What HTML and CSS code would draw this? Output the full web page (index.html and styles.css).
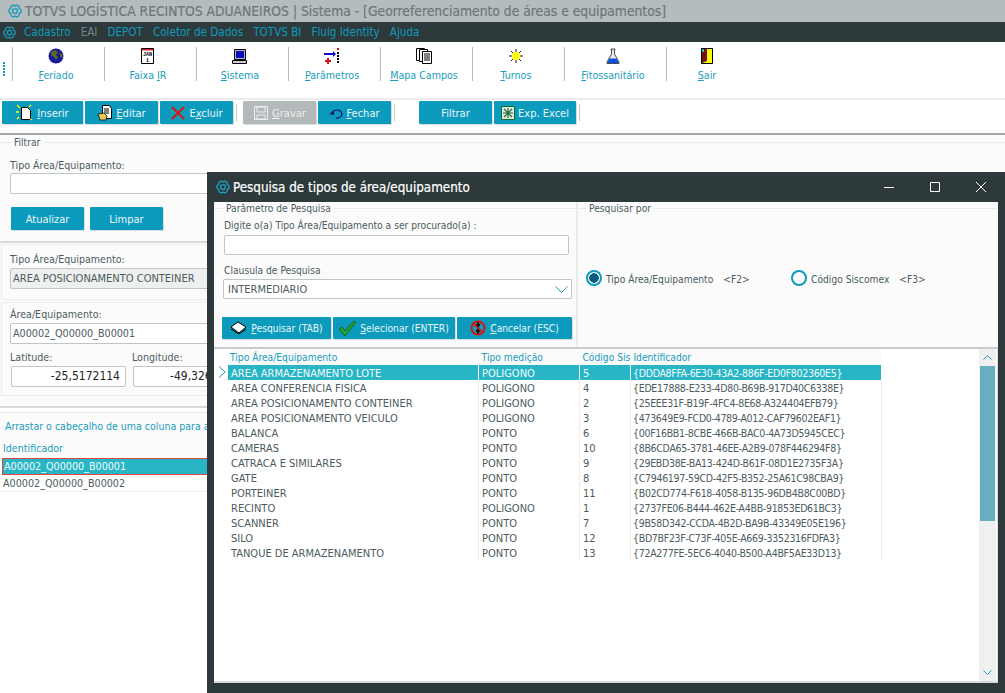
FILE: index.html
```html
<!DOCTYPE html>
<html lang="pt-BR">
<head>
<meta charset="utf-8">
<title>TOTVS</title>
<link rel="stylesheet" href="styles.css">
</head>
<body>
<svg class="defs" width="0" height="0" aria-hidden="true">
  <symbol id="gear" viewBox="0 0 16 16">
    <g fill="none" stroke="currentColor" stroke-width="1.4">
      <path d="M12.33 5.5A2.6 2.6 0 0 1 12.33 10.5A2.6 2.6 0 0 1 8 13A2.6 2.6 0 0 1 3.67 10.5A2.6 2.6 0 0 1 3.67 5.5A2.6 2.6 0 0 1 8 3A2.6 2.6 0 0 1 12.33 5.5Z"/>
      <circle cx="8" cy="8" r="2.400"/>
    </g>
  </symbol>
</svg>
<div class="app">
  <header class="titlebar"><svg class="gear"><use href="#gear"/></svg><span>TOTVS LOGÍSTICA RECINTOS ADUANEIROS | Sistema - [Georreferenciamento de áreas e equipamentos]</span></header>
  <nav class="menubar">
    <svg class="gear small"><use href="#gear"/></svg>
    <span>Cadastro</span><span class="off">EAI</span><span>DEPOT</span><span>Coletor de Dados</span><span>TOTVS BI</span><span>Fluig Identity</span><span>Ajuda</span>
  </nav>
  <div class="toolbar">
    <div class="handle"></div>
    <div class="tool"><svg width="16" height="16" viewBox="0 0 16 16"><circle cx="8" cy="8" r="7.500" fill="#1a1a9a"/><path d="M3 4l4-2 3 2-2 3 2 2-2 3-2-3-3-2zM11 5l3 1 1 3-2 1z" fill="#5d6b1e"/></svg><span><u>F</u>eriado</span></div>
    <div class="tool"><svg width="14" height="16" viewBox="0 0 14 16"><path d="M.5.500h12v15H.5z" fill="#fff" stroke="#000"/><path d="M1 1h11v1.500H1z" fill="#d22"/><text x="6.500" y="8" class="cal">JAN</text><text x="6.500" y="14" class="cal">1</text></svg><span>Faixa <u>I</u>R</span></div>
    <div class="tool"><svg width="16" height="16" viewBox="0 0 16 16"><path d="M2.500 1.500h11v10h-11z" fill="#bbb" stroke="#000"/><path d="M4 3h8v7H4z" fill="#0a0ac0"/><path d="M.5 12.500h14v3H.5z" fill="#ccc" stroke="#000"/></svg><span><u>S</u>istema</span></div>
    <div class="tool"><svg width="16" height="16" viewBox="0 0 16 16"><path d="M0 5h9V3l3 3-3 3V7H0z" fill="#0a0ad0"/><path d="M3 10h2v2h2v2H5v2H3v-2H1v-2h2z" fill="#e01010"/><path d="M13 0h2v2h-2z" fill="#e01010"/><path d="M13 4h2v2h-2zM13 7h2v2h-2zM13 10h2v2h-2zM13 13h2v2h-2z" fill="#000"/></svg><span><u>P</u>arâmetros</span></div>
    <div class="tool"><svg width="16" height="16" viewBox="0 0 16 16"><path d="M.5.500h8v12h-8z" fill="#fff" stroke="#000"/><path d="M3.500 1.500h8v12h-8z" fill="#fff" stroke="#000"/><path d="M6.500 3.500h9v12h-9z" fill="#fff" stroke="#000"/><path d="M8 6h6M8 8h6M8 10h6M8 12h6" stroke="#000"/></svg><span><u>M</u>apa Campos</span></div>
    <div class="tool"><svg width="16" height="16" viewBox="0 0 16 16"><path d="M8 1v3M8 12v3M1 8h3M12 8h3M3 3l2 2M11 11l2 2M13 3l-2 2M5 11l-2 2" stroke="#222"/><circle cx="8" cy="8" r="4" fill="#ff0"/></svg><span><u>T</u>urnos</span></div>
    <div class="tool wide"><svg width="16" height="16" viewBox="0 0 16 16"><path d="M6 1h4v1H9.500v4L14 14v1.500H2V14l4.500-8V2H6z" fill="#e8e8f0" stroke="#222" stroke-width=".8"/><path d="M4.500 10.500h7l2.500 4.500H2z" fill="#0a50e0"/></svg><span><u>F</u>itossanitário</span></div>
    <div class="tool last"><svg width="12" height="16" viewBox="0 0 12 16"><path d="M.5.500h11v15H.5z" fill="#ff0" stroke="#000"/><path d="M1 1h5v12l-5 2z" fill="#7a1010"/><path d="M1 1h2v3H1z" fill="#3bb"/></svg><span><u>S</u>air</span></div>
  </div>
  <div class="actionbar">
    <button class="btn w81"><svg width="18" height="18" viewBox="0 0 18 18"><path d="M5.500 3.500h6l3 3v9h-9z" fill="#fff" stroke="#000"/><path d="M1 1l3 3M15 1l-2 2M0 8h3M1 15l2-2M16 16l-2-1" stroke="#ff0" stroke-width="1.300"/></svg><span><u>I</u>nserir</span></button>
    <button class="btn w73"><svg width="16" height="16" viewBox="0 0 16 16"><path d="M5.500.5h7l2 3v10h-9z" fill="#fff" stroke="#000"/><path d="M7 4h5M7 6h5M7 8h5" stroke="#000"/><path d="M1 9l6-1 3 3-1 4H3z" fill="#e6c85a" stroke="#000" stroke-width=".7"/></svg><span><u>E</u>ditar</span></button>
    <button class="btn w73"><svg width="16" height="16" viewBox="0 0 16 16"><path d="M2 2l12 12M14 2L2 14" stroke="#e01010" stroke-width="1.800"/></svg><span>E<u>x</u>cluir</span></button>
    <i class="sep"></i>
    <button class="btn w73 disabled"><svg width="16" height="16" viewBox="0 0 16 16"><path d="M1.500 1.500h13v13h-13z" fill="none" stroke="#eee"/><path d="M4 2h8v5H4zM4 10h8v4H4z" fill="none" stroke="#eee"/></svg><span><u>G</u>ravar</span></button>
    <button class="btn w73"><svg width="14" height="12" viewBox="0 0 14 12"><path d="M3 6a5 4 0 1 1 4 5h3" fill="none" stroke="#12126e" stroke-width="1.200"/><path d="M0 7l5-3v4z" fill="#12126e"/></svg><span><u>F</u>echar</span></button>
    <i class="sep"></i>
    <i class="gap"></i>
    <button class="btn w73"><span>Filtrar</span></button>
    <button class="btn w82"><svg width="14" height="14" viewBox="0 0 14 14"><path d="M.5.500h13v13H.5z" fill="#dfeadf" stroke="#0d6b2c"/><path d="M3 3l8 8M11 3l-8 8M7 2v10M2 7h10" stroke="#226b3a" stroke-width="1.200"/></svg><span>Exp. Excel</span></button>
    <i class="sep"></i>
  </div>
  <main class="content">
    <section class="filter">
      <div class="legend"><span>Filtrar</span></div>
      <label>Tipo Área/Equipamento:</label>
      <div class="input full"></div>
      <div class="filter-btns"><button class="btn w73"><span>Atualizar</span></button><button class="btn w73"><span>Limpar</span></button></div>
    </section>
    <section class="panel p1">
      <label>Tipo Área/Equipamento:</label>
      <div class="input full ro">AREA POSICIONAMENTO CONTEINER</div>
    </section>
    <section class="panel p2">
      <label>Área/Equipamento:</label>
      <div class="input full code">A00002_Q00000_B00001</div>
      <div class="coords">
        <div class="coord"><label>Latitude:</label><div class="input num">-25,5172114</div></div>
        <div class="coord"><label>Longitude:</label><div class="input num long">-49,3269</div></div>
      </div>
    </section>
    <section class="records">
      <div class="drag">Arrastar o cabeçalho de uma coluna para agrupar</div>
      <div class="rec-head">Identificador</div>
      <div class="rec sel">A00002_Q00000_B00001</div>
      <div class="rec">A00002_Q00000_B00002</div>
    </section>
  </main>
</div>

<div class="dialog">
  <div class="dlg-title">
    <svg class="gear"><use href="#gear"/></svg>
    <span class="dlg-name">Pesquisa de tipos de área/equipamento</span>
    <svg class="wbtn" width="12" height="12" viewBox="0 0 12 12"><path d="M1 6.500h10" stroke="#fff"/></svg>
    <svg class="wbtn" width="12" height="12" viewBox="0 0 12 12"><path d="M1.500 1.500h9v9h-9z" fill="none" stroke="#fff"/></svg>
    <svg class="wbtn" width="12" height="12" viewBox="0 0 12 12"><path d="M1 1l10 10M11 1L1 11" stroke="#fff"/></svg>
  </div>
  <div class="dlg-body">
    <div class="dlg-top">
      <section class="group g-left">
        <div class="legend l2"><span>Parâmetro de Pesquisa</span></div>
        <label>Digite o(a) Tipo Área/Equipamento a ser procurado(a) :</label>
        <div class="input search"></div>
        <label class="lab2">Clausula de Pesquisa</label>
        <div class="select"><span>INTERMEDIARIO</span><svg width="13" height="7" viewBox="0 0 13 7"><path d="M.5.500l6 6 6-6" fill="none" stroke="#1a9cbd"/></svg></div>
        <div class="dlg-btns">
          <button class="btn d1"><svg width="17" height="14" viewBox="0 0 17 14"><path d="M1 6l7-5 8 5-7 6z" fill="#fff" stroke="#000"/><path d="M1 8l8 5 7-5" fill="none" stroke="#000"/></svg><span><u>P</u>esquisar (TAB)</span></button>
          <button class="btn d2"><svg width="17" height="15" viewBox="0 0 17 15"><path d="M0 8l3-2 3 4L15 0l2 1L6 15z" fill="#2aa52a" stroke="#0b4a0b" stroke-width=".7"/></svg><span><u>S</u>elecionar (ENTER)</span></button>
          <button class="btn d3"><svg width="16" height="16" viewBox="0 0 16 16"><circle cx="8" cy="8" r="6.500" fill="none" stroke="#e01010" stroke-width="2"/><path d="M8 2v12M6 5h4M6 11h4" stroke="#111" stroke-width="2"/><path d="M3 3l10 10" stroke="#e01010" stroke-width="1.600"/></svg><span><u>C</u>ancelar (ESC)</span></button>
        </div>
      </section>
      <section class="group g-right">
        <div class="legend l3"><span>Pesquisar por</span></div>
        <div class="radios">
          <div class="radio on"><i></i><span>Tipo Área/Equipamento</span><span class="key">&lt;F2&gt;</span></div>
          <div class="radio"><i></i><span>Código Siscomex</span><span class="key">&lt;F3&gt;</span></div>
        </div>
      </section>
    </div>
    <div class="results">
      <div class="grid">
        <div class="row head"><div class="c c0"></div><div class="c c1">Tipo Área/Equipamento</div><div class="c c2">Tipo medição</div><div class="c c3">Código Sis</div><div class="c c4">Identificador</div></div>
        <div class="row sel"><div class="c c0"><svg width="8" height="12" viewBox="0 0 8 12"><path d="M1 .5l6 5.500-6 5.500" fill="none" stroke="#1a9cbd"/></svg></div><div class="c c1">AREA ARMAZENAMENTO LOTE</div><div class="c c2">POLIGONO</div><div class="c c3">5</div><div class="c c4">{DDDA8FFA-6E30-43A2-886F-ED0F802360E5}</div></div>
        <div class="row"><div class="c c0"></div><div class="c c1">AREA CONFERENCIA FISICA</div><div class="c c2">POLIGONO</div><div class="c c3">4</div><div class="c c4">{EDE17888-E233-4D80-B69B-917D40C6338E}</div></div>
        <div class="row"><div class="c c0"></div><div class="c c1">AREA POSICIONAMENTO CONTEINER</div><div class="c c2">POLIGONO</div><div class="c c3">2</div><div class="c c4">{25EEE31F-B19F-4FC4-8E68-A324404EFB79}</div></div>
        <div class="row"><div class="c c0"></div><div class="c c1">AREA POSICIONAMENTO VEICULO</div><div class="c c2">POLIGONO</div><div class="c c3">3</div><div class="c c4">{473649E9-FCD0-4789-A012-CAF79602EAF1}</div></div>
        <div class="row"><div class="c c0"></div><div class="c c1">BALANCA</div><div class="c c2">PONTO</div><div class="c c3">6</div><div class="c c4">{00F16BB1-8CBE-466B-BAC0-4A73D5945CEC}</div></div>
        <div class="row"><div class="c c0"></div><div class="c c1">CAMERAS</div><div class="c c2">PONTO</div><div class="c c3">10</div><div class="c c4">{8B6CDA65-3781-46EE-A2B9-078F446294F8}</div></div>
        <div class="row"><div class="c c0"></div><div class="c c1">CATRACA E SIMILARES</div><div class="c c2">PONTO</div><div class="c c3">9</div><div class="c c4">{29EBD38E-BA13-424D-B61F-08D1E2735F3A}</div></div>
        <div class="row"><div class="c c0"></div><div class="c c1">GATE</div><div class="c c2">PONTO</div><div class="c c3">8</div><div class="c c4">{C7946197-59CD-42F5-B352-25A61C98CBA9}</div></div>
        <div class="row"><div class="c c0"></div><div class="c c1">PORTEINER</div><div class="c c2">PONTO</div><div class="c c3">11</div><div class="c c4">{B02CD774-F618-4058-B135-96DB4B8C00BD}</div></div>
        <div class="row"><div class="c c0"></div><div class="c c1">RECINTO</div><div class="c c2">POLIGONO</div><div class="c c3">1</div><div class="c c4">{2737FE06-B444-462E-A4BB-91853ED61BC3}</div></div>
        <div class="row"><div class="c c0"></div><div class="c c1">SCANNER</div><div class="c c2">PONTO</div><div class="c c3">7</div><div class="c c4">{9B58D342-CCDA-4B2D-BA9B-43349E05E196}</div></div>
        <div class="row"><div class="c c0"></div><div class="c c1">SILO</div><div class="c c2">PONTO</div><div class="c c3">12</div><div class="c c4">{BD7BF23F-C73F-405E-A669-3352316FDFA3}</div></div>
        <div class="row"><div class="c c0"></div><div class="c c1">TANQUE DE ARMAZENAMENTO</div><div class="c c2">PONTO</div><div class="c c3">13</div><div class="c c4">{72A277FE-5EC6-4040-B500-A4BF5AE33D13}</div></div>
      </div>
      <div class="scroll">
        <svg class="arrow" width="9" height="5" viewBox="0 0 9 5"><path d="M.5 4.500l4-4 4 4" fill="none" stroke="#1a9cbd"/></svg>
        <div class="thumb"></div>
        <svg class="arrow down" width="9" height="5" viewBox="0 0 9 5"><path d="M.5.500l4 4 4-4" fill="none" stroke="#1a9cbd"/></svg>
      </div>
    </div>
  </div>
</div>
</body>
</html>
```
FILE: styles.css
```css
* { box-sizing: border-box; }
html, body { margin: 0; height: 693px; overflow: hidden; }
body { font-family: "DejaVu Sans", "Noto Sans", sans-serif; font-stretch: condensed; font-size: 11px; color: #4d5b60; background: #fff; position: relative; width: 1005px; }
.defs { position: absolute; }
.app { display: flex; flex-direction: column; height: 693px; }
.gear { width: 16px; height: 16px; color: #1a9cbd; flex: none; }
.gear.small { width: 15px; height: 15px; margin-right: 2px; }
.cal { font: bold 5px "Liberation Mono", monospace; text-anchor: middle; fill: #000; }

.titlebar { height: 22px; background: #b5bcbd; display: flex; align-items: center; gap: 2px; padding-left: 7px; color: #6f7779; font-size: 13.75px; white-space: nowrap; -webkit-text-stroke: .2px; }
.menubar { height: 20px; background: #2d393b; display: flex; align-items: center; padding-left: 2px; color: #0f9bbb; font-size: 11.6px; }
.menubar span { padding: 0 5px; }
.menubar .off { color: #7b8486; }

.toolbar { height: 56px; display: flex; padding: 5px 0 0 3px; }
.handle { width: 2px; height: 15px; margin: 15px 7px 0 0; background: repeating-linear-gradient(#0f9bbb 0 2px, transparent 2px 3px); }
.tool { width: 92px; height: 34px; border-left: 1px solid #b7bdbd; display: flex; flex-direction: column; align-items: center; gap: 4px; padding: 1px 5px 0 0; color: #1a9cbd; font-size: 10.6px; }
.tool.wide { width: 102px; }
.tool.last { width: 86px; }
.tool svg, .tool span { flex: none; }
.tool span { line-height: 15px; }

.actionbar { height: 27px; border-top: 2px solid #ececec; display: flex; align-items: center; gap: 2px; padding-left: 2px; }
.btn { height: 23px; border: 0; border-radius: 1px; background: #0c9abd; color: #e9f6fa; font: inherit; font-stretch: condensed; display: flex; align-items: center; justify-content: center; gap: 3px; padding: 0; box-shadow: 1px 1px 0 #d9dddd; }
.btn svg { flex: none; }
.btn span { padding-top: 1px; }
.w81 { width: 81px; } .w73 { width: 73px; } .w82 { width: 82px; }
.btn.disabled { background: #b3b9ba; color: #eceeee; }
.sep { width: 1px; height: 17px; background: #c5c9c9; margin: 0 4px 0 1px; }
.gap { width: 16px; }

.content { flex: 1; border-top: 2px solid #a5a8a8; margin-top: 8px; background: #fbfbfb; display: flex; flex-direction: column; min-height: 0; }
label { display: block; height: 14px; line-height: 14px; font-size: 10.6px; }
.filter { height: 108px; padding: 0 0 0 10px; border-bottom: 2px solid #d6d9d9; }
.legend { height: 14px; margin-left: -10px; display: flex; align-items: center; font-size: 10.2px; }
.legend::before { content: ""; width: 12px; height: 1px; background: #e9ebeb; margin-right: 2px; }
.legend::after { content: ""; flex: 1; height: 1px; background: #e9ebeb; margin-left: 3px; }
.filter label { margin-top: 9px; }
.input { height: 21px; background: #fff; border: 1px solid #c0c5c6; border-radius: 2px; line-height: 19px; padding: 0 2px; color: #4d5b60; white-space: nowrap; overflow: hidden; }
.full { width: 215px; margin-top: 2px; }
.code { font-size: 10.7px; }
.ro { background: #eeefef; }
.filter .input { margin-top: 1px; }
.filter-btns { display: flex; gap: 6px; margin: 13px 0 0 1px; }
.panel { margin: 1px 0 0 1px; padding: 0 0 0 8px; border: 1px solid #eceeee; border-right: 0; }
.p1 { height: 56px; padding-top: 7px; }
.p2 { height: 94px; margin-top: 2px; padding-top: 4px; }
.coords { display: flex; gap: 6px; margin-top: 6px; }
.coord label { margin-bottom: 2px; }
.num { width: 115px; text-align: right; margin-left: 1px; font-size: 12px; color: #222; padding-right: 5px; }
.coord + .coord .num { text-align: left; padding-left: 36px; }
.long { width: 82px; }
.records { margin-top: 10px; border-top: 2px solid #d6d9d9; flex: 1; background: #fff; }
.drag { height: 26px; margin-top: 4px; padding: 6px 0 0 5px; border-top: 1px solid #e4e7e7; color: #1a9cbd; background: #fbfbfb; line-height: 14px; font-size: 10.5px; white-space: nowrap; width: 207px; overflow: hidden; }
.rec-head { height: 20px; padding-left: 3px; color: #1a9cbd; line-height: 20px; font-size: 10.6px; background: #fbfbfb; width: 207px; }
.rec { height: 17px; line-height: 17px; padding-left: 3px; border-bottom: 1px solid #eee; color: #4d5b60; font-size: 10.7px; }
.rec.sel { background: #28b5c6; color: #f4fbfc; border: 1px solid #e0443a; padding-left: 1px; margin-left: 2px; line-height: 15px; }

.dialog { position: absolute; left: 207px; top: 172px; width: 798px; height: 521px; background: #2d393b; padding: 0 7px 10px 7px; display: flex; flex-direction: column; }
.dlg-title { height: 30px; display: flex; align-items: center; margin-left: -7px; padding-left: 8px; color: #fff; }
.dlg-name { flex: 1; margin-left: 2px; font-size: 13.3px; -webkit-text-stroke: .2px; }
.wbtn { width: 12px; margin-right: 34px; }
.wbtn:last-child { margin-right: 11px; }
.dlg-body { flex: 1; background: #fbfbfb; display: flex; flex-direction: column; min-height: 0; }
.dlg-top { height: 145px; display: flex; }
.g-left { width: 364px; border-right: 2px solid #ececec; padding: 0 0 0 10px; }
.g-left label { margin-top: 3px; font-size: 10.2px; line-height: 15px; }
.g-right { flex: 1; }
.l2 { height: 13px; }
.l2::before { width: 10px; }
.l3 { height: 13px; margin-left: 0; }
.l3::before { width: 9px; }
.search { width: 345px; height: 20px; margin-top: 3px; }
.g-left .lab2 { margin-top: 8px; }
.select { width: 349px; height: 20px; margin-left: -1px; margin-top: 2px; background: #fff; border: 1px solid #c0c5c6; border-radius: 1px; display: flex; align-items: center; justify-content: space-between; padding: 0 3px 0 4px; }
.dlg-btns { display: flex; gap: 2px; margin: 18px 0 0 -2px; }
.dlg-btns .btn { height: 22px; gap: 4px; font-size: 10.2px; }
.d1 { width: 109px; } .d2 { width: 122px; } .d3 { width: 115px; }
.radios { display: flex; margin: 55px 0 0 8px; font-size: 10.2px; }
.radio { display: flex; align-items: center; gap: 4px; width: 205px; }
.radio span { padding-top: 2px; }
.radio i { width: 16px; height: 16px; border: 2.500px solid #0c9abd; border-radius: 50%; background: #fff; }
.radio.on i { background: radial-gradient(circle, #0a5c7a 0 4.500px, #fff 5px); }
.key { margin-left: 6px; }
.results { flex: 1; border-top: 2px solid #c8cccc; border-right: 1px solid #d8dbdb; border-bottom: 2px solid #d8dbdb; background: #fff; display: flex; min-height: 0; }
.grid { width: 765px; padding-top: 1px; }
.row { display: flex; height: 15px; line-height: 15px; white-space: nowrap; }
.head { color: #1a9cbd; background: #fbfbfb; width: 667px; font-size: 10.2px; }
.c { padding: 1px 0 0 3px; border-right: 1px solid #ececec; overflow: hidden; }
.head .c { border: 0; padding: 0 0 0 3px; }
.head .c0 { padding: 0; }
.head .c1 { padding-left: 2px; }
.c0 { width: 14px; padding: 1px 0 0 4px; background: #fff; border: 0; }
.c1 { width: 251px; }
.c2 { width: 101px; }
.c3 { width: 51px; }
.c4 { width: 251px; font-size: 10.5px; letter-spacing: -.3px; padding-left: 2px; }
.head .c4 { letter-spacing: 0; font-size: 10.2px; }
.sel .c1, .sel .c2, .sel .c3, .sel .c4 { background: #28b5c6; color: #f4fbfc; border-right-color: #fff; }
.scroll { width: 17px; background: #f0f0f0; display: flex; flex-direction: column; align-items: center; }
.arrow { margin: 6px 0; flex: none; }
.thumb { width: 15px; height: 155px; background: #67aec1; flex: none; }
.arrow.down { margin: auto 0 6px; }
```
